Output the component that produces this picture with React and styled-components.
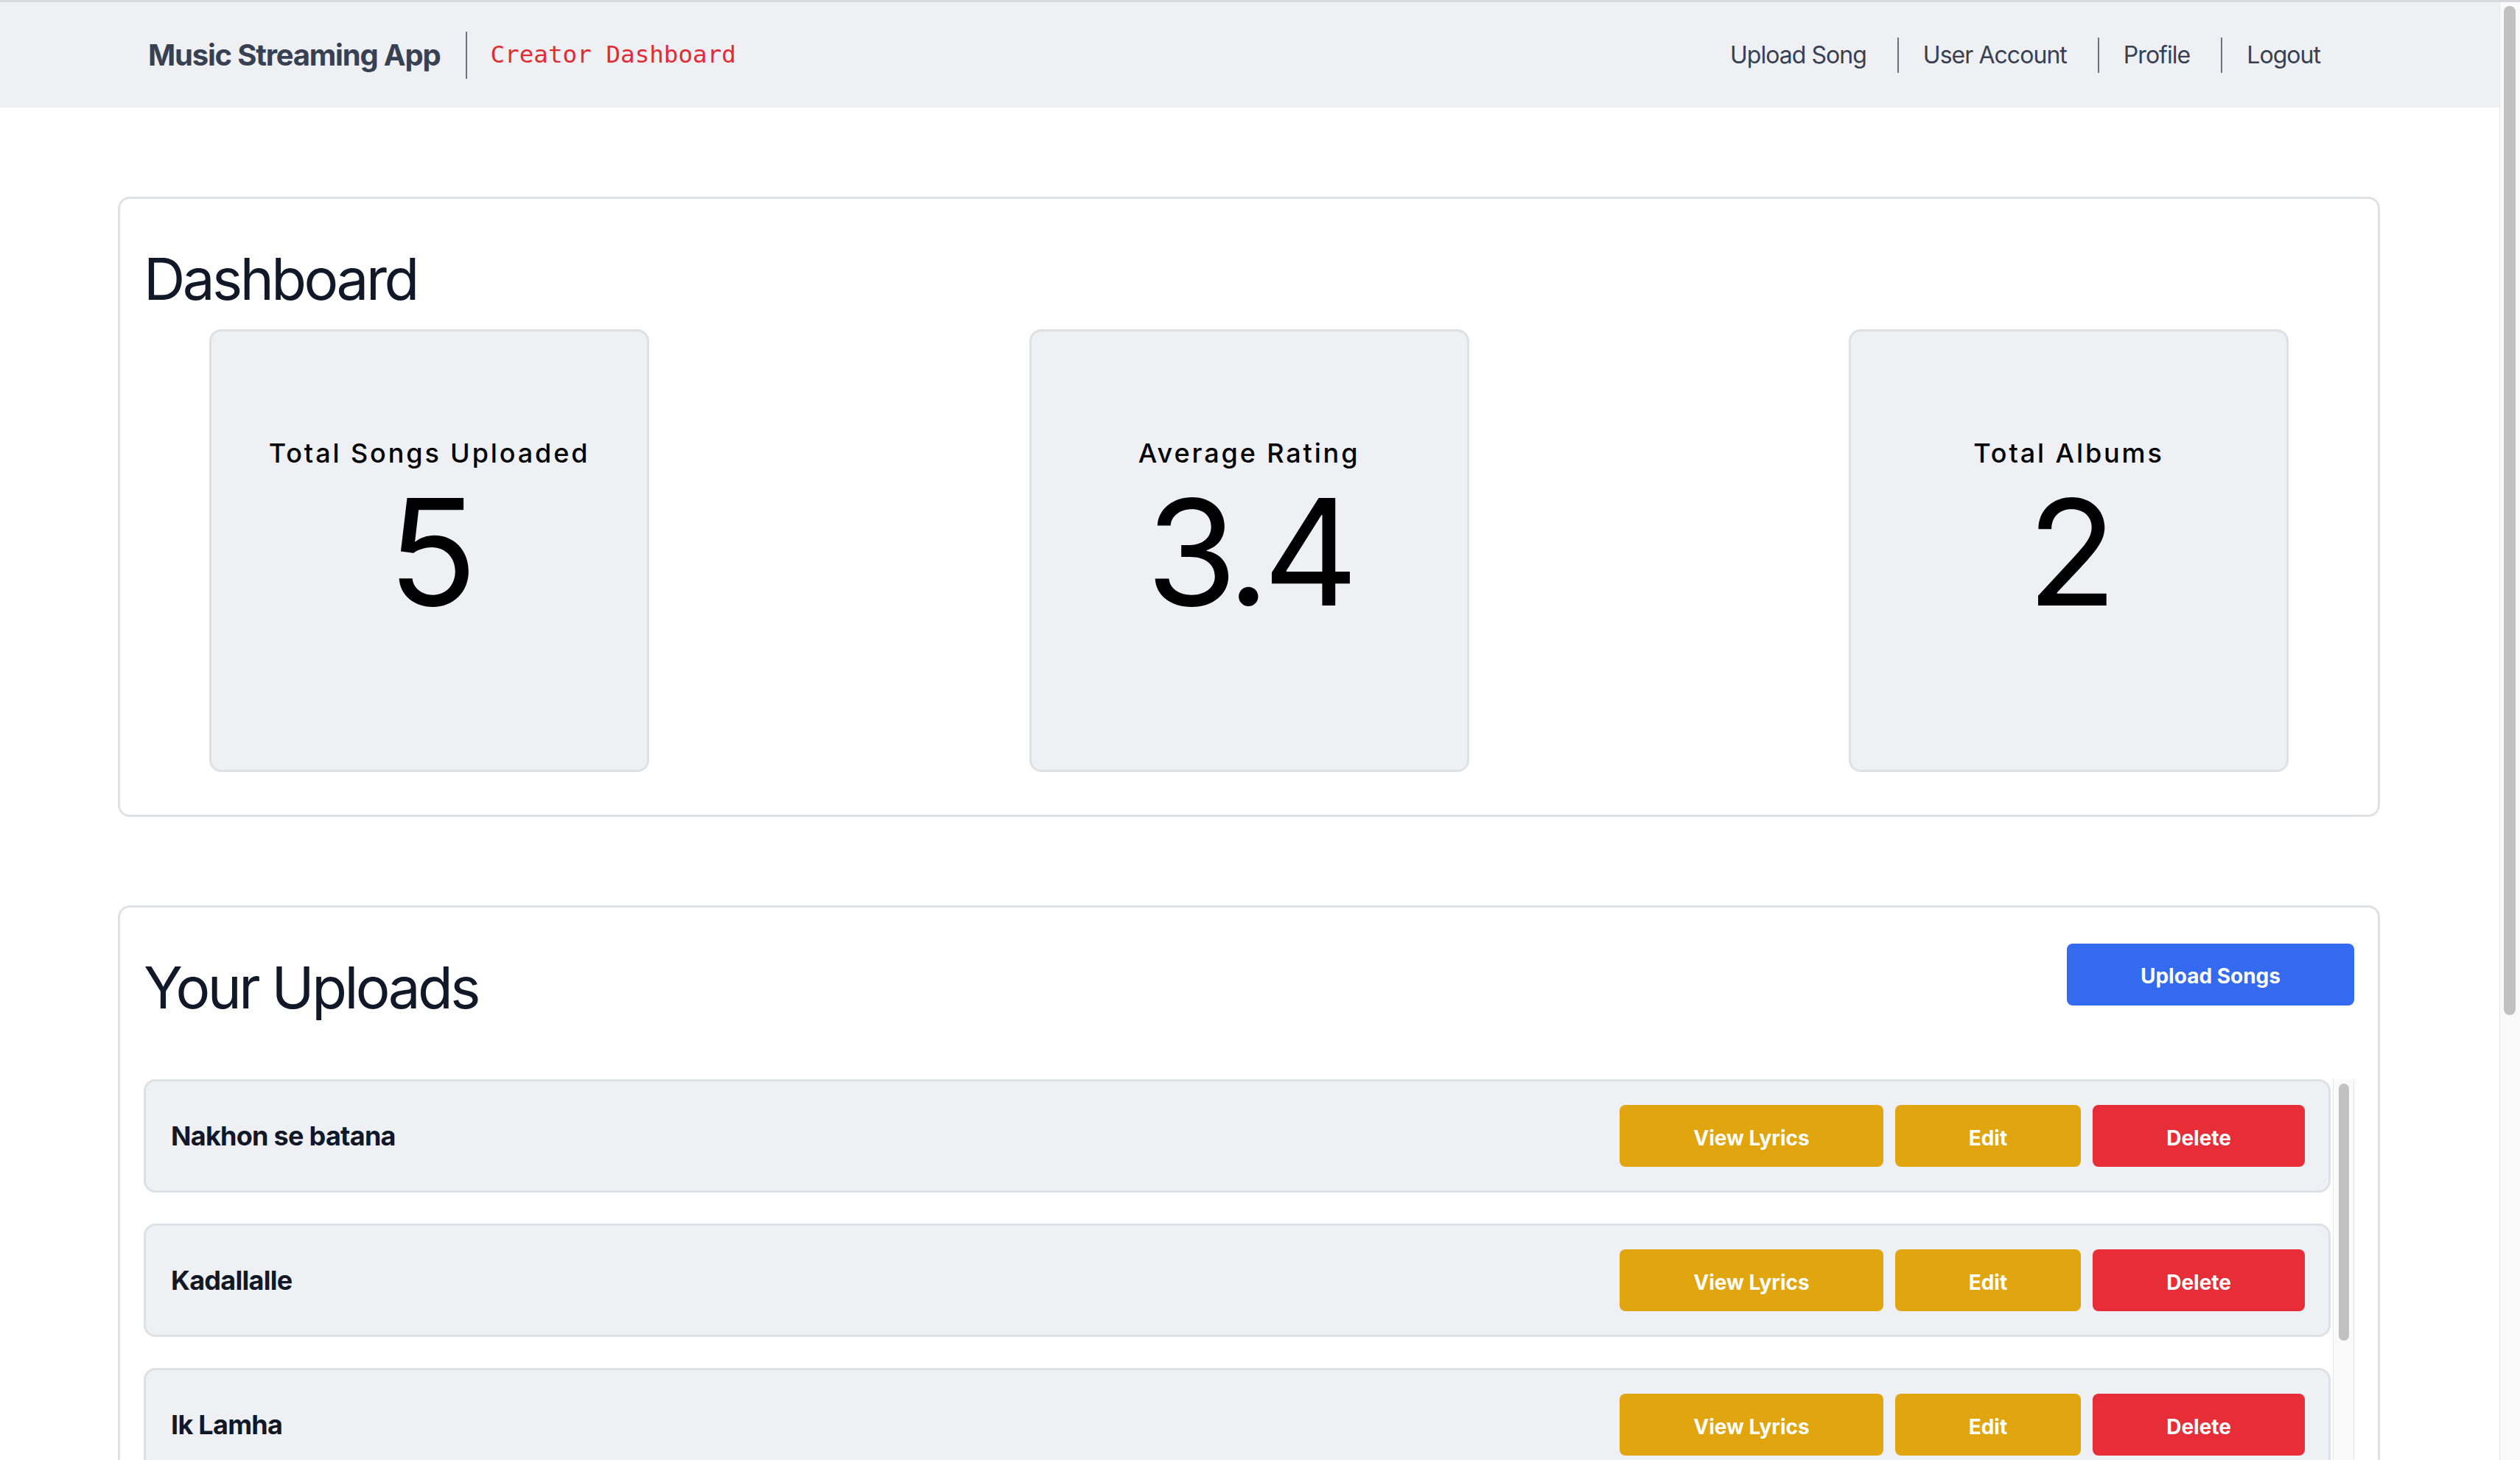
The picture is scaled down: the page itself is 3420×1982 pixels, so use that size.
import React from 'react';
import styled, { createGlobalStyle } from 'styled-components';

const GlobalStyle = createGlobalStyle`
  html, body { margin: 0; padding: 0; background: #ffffff; }
  body { font-family: Inter, "Noto Sans", sans-serif; overflow: hidden; }
  * { box-sizing: border-box; }
`;

const Screen = styled.div`
  width: 3420px;
  height: 1982px;
  display: flex;
  flex-direction: column;
  overflow: hidden;
  background: #ffffff;
`;

const TopStrip = styled.div`
  height: 3px;
  flex-shrink: 0;
  background: #d9d9db;
`;

const Body = styled.div`
  flex: 1;
  display: flex;
  min-height: 0;
`;

const Page = styled.div`
  flex: 1;
  min-width: 0;
  overflow: hidden;
`;

const PageScroll = styled.div`
  width: 28px;
  flex-shrink: 0;
  background: #fafafa;
  border-left: 1px solid #e6e6e6;
  padding: 5px 0 0 5px;
`;

const PageThumb = styled.div`
  width: 16px;
  height: 1370px;
  border-radius: 8px;
  background: #c1c1c1;
`;

const Navbar = styled.nav`
  height: 143px;
  background: #eff0f4;
  display: flex;
  align-items: center;
  justify-content: space-between;
  padding: 0 243px 0 201px;
`;

const Brand = styled.div`
  display: flex;
  align-items: center;
`;

const BrandTitle = styled.span`
  font: 700 40px/1 Inter, sans-serif;
  color: #374151;
  letter-spacing: -0.03em;
`;

const BrandDivider = styled.span`
  width: 2px;
  height: 64px;
  background: #6b7280;
  margin: 0 32px 0 34px;
`;

const BrandTag = styled.span`
  font: 400 32.6px/1 "DejaVu Sans Mono", monospace;
  color: #e12b35;
`;

const NavLinks = styled.div`
  display: flex;
  align-items: center;
`;

const NavLink = styled.a`
  font: 400 32px/1 Inter, sans-serif;
  letter-spacing: -0.03em;
  color: #374151;
  text-decoration: none;
`;

const NavDivider = styled.span`
  width: 2px;
  height: 48px;
  background: #6b7280;
  margin: 0 33px 0 42px;
`;

const Main = styled.main`
  padding: 121px 162px 0 160px;
  display: flex;
  flex-direction: column;
  gap: 120px;
`;

const Card = styled.section`
  border: 3px solid #e0e1e6;
  border-radius: 16px;
  padding: 32px;
  background: #ffffff;
`;

const Heading = styled.h1`
  margin: 38px 0 0;
  font: 400 78px/78px Inter, sans-serif;
  letter-spacing: -0.045em;
  color: #111827;
`;

const StatsRow = styled.div`
  display: flex;
  justify-content: space-between;
  padding: 0 89px;
  margin: 29px 0 26px;
`;

const StatBox = styled.div`
  width: 597px;
  height: 601px;
  border: 3px solid #dfe0e5;
  border-radius: 16px;
  background: #eff0f4;
  display: flex;
  flex-direction: column;
  align-items: center;
  padding-top: 147px;
`;

const StatLabel = styled.div`
  font: 500 36px/36px Inter, sans-serif;
  letter-spacing: 0.08em;
  color: #000000;
`;

const StatValue = styled.div`
  margin-top: 16px;
  font: 400 200px/200px Inter, sans-serif;
  letter-spacing: -0.045em;
  color: #000000;
`;

const UploadsHeader = styled.div`
  display: flex;
  justify-content: space-between;
  align-items: flex-start;
`;

const Button = styled.button`
  height: 84px;
  padding: 5px 100px 0;
  border: none;
  border-radius: 8px;
  font: 700 28px/1 Inter, sans-serif;
  color: #ffffff;
  cursor: pointer;
  background: ${(p) =>
    p.$variant === 'danger' ? '#e62d38' : p.$variant === 'warning' ? '#e0a50f' : '#336af0'};
`;

const HeaderButton = styled(Button)`
  margin-top: 17px;
  padding-top: 3px;
`;

const List = styled.div`
  margin-top: 85px;
  display: flex;
  gap: 3px;
`;

const Rows = styled.div`
  flex: 1;
  display: flex;
  flex-direction: column;
  gap: 42px;
`;

const Row = styled.div`
  height: 154px;
  flex-shrink: 0;
  border: 3px solid #dfe0e5;
  border-radius: 16px;
  background: #eff0f4;
  padding: 0 32px 0 34px;
  display: flex;
  align-items: center;
  justify-content: space-between;
`;

const SongTitle = styled.div`
  font: 700 36px/1 Inter, sans-serif;
  letter-spacing: -0.02em;
  color: #111827;
`;

const Actions = styled.div`
  display: flex;
  gap: 16px;
`;

const ListScroll = styled.div`
  width: 29px;
  flex-shrink: 0;
  background: #fafafa;
  border-left: 1px solid #e4e4e4;
  border-right: 1px solid #e4e4e4;
  padding: 6px 0 0 7px;
`;

const ListThumb = styled.div`
  width: 14px;
  height: 349px;
  border-radius: 7px;
  background: #c1c1c1;
`;

const stats = [
  { label: 'Total Songs Uploaded', value: '5' },
  { label: 'Average Rating', value: '3.4' },
  { label: 'Total Albums', value: '2' },
];

const songs = ['Nakhon se batana', 'Kadallalle', 'Ik Lamha', 'Tum Hi Ho', 'Kesariya'];

const links = ['Upload Song', 'User Account', 'Profile', 'Logout'];

export default function App() {
  return (
    <>
      <GlobalStyle />
      <Screen>
        <TopStrip />
        <Body>
          <Page>
            <Navbar>
              <Brand>
                <BrandTitle>Music Streaming App</BrandTitle>
                <BrandDivider />
                <BrandTag>Creator Dashboard</BrandTag>
              </Brand>
              <NavLinks>
                {links.map((l, i) => (
                  <React.Fragment key={l}>
                    {i > 0 && <NavDivider />}
                    <NavLink href="#">{l}</NavLink>
                  </React.Fragment>
                ))}
              </NavLinks>
            </Navbar>
            <Main>
              <Card>
                <Heading>Dashboard</Heading>
                <StatsRow>
                  {stats.map((s) => (
                    <StatBox key={s.label}>
                      <StatLabel>{s.label}</StatLabel>
                      <StatValue>{s.value}</StatValue>
                    </StatBox>
                  ))}
                </StatsRow>
              </Card>
              <Card>
                <UploadsHeader>
                  <Heading>Your Uploads</Heading>
                  <HeaderButton>Upload Songs</HeaderButton>
                </UploadsHeader>
                <List>
                  <Rows>
                    {songs.map((s) => (
                      <Row key={s}>
                        <SongTitle>{s}</SongTitle>
                        <Actions>
                          <Button $variant="warning">View Lyrics</Button>
                          <Button $variant="warning">Edit</Button>
                          <Button $variant="danger">Delete</Button>
                        </Actions>
                      </Row>
                    ))}
                  </Rows>
                  <ListScroll>
                    <ListThumb />
                  </ListScroll>
                </List>
              </Card>
            </Main>
          </Page>
          <PageScroll>
            <PageThumb />
          </PageScroll>
        </Body>
      </Screen>
    </>
  );
}
